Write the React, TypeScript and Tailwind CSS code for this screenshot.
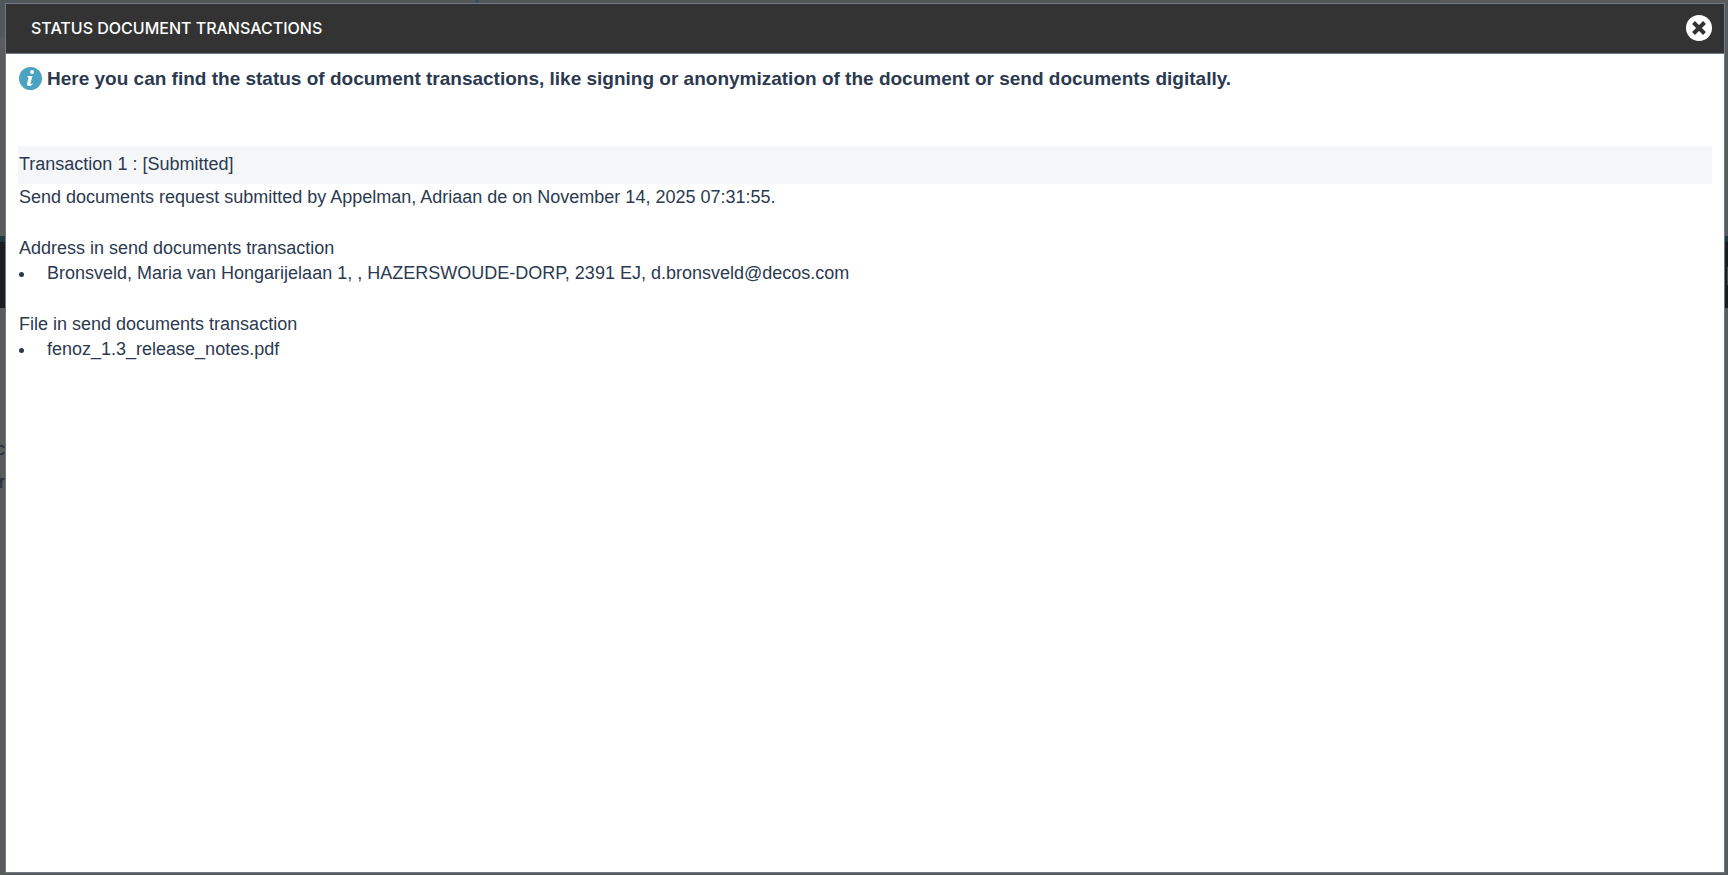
import React from "react";

const addresses = [
  "Bronsveld, Maria van Hongarijelaan 1, , HAZERSWOUDE-DORP, 2391 EJ, d.bronsveld@decos.com",
];
const files = ["fenoz_1.3_release_notes.pdf"];

function InfoIcon() {
  return (
    <svg viewBox="0 0 24 24" className="size-6 shrink-0" aria-hidden="true">
      <circle cx="11.5" cy="11.5" r="11.5" fill="#4aa3c0" />
      <circle cx="13.1" cy="5.1" r="2" fill="#fff" />
      <path
        d="M8.5 8.9h5l-2 7.6c-.1.6.3.7.8.5l1.2-.7.3.6c-1.2 1.4-2.6 2.1-3.9 2.1-1.5 0-2.2-1-1.8-2.5l1.4-5.5c.1-.6-.2-.8-.8-.8h-.2z"
        fill="#fff"
      />
    </svg>
  );
}

function CloseIcon() {
  return (
    <svg viewBox="0 0 26 26" className="size-[26px]" aria-hidden="true">
      <circle cx="13" cy="13" r="13" fill="#fff" />
      <path d="M7.5 7.5l11 11M18.5 7.5l-11 11" stroke="#333" strokeWidth="4" />
    </svg>
  );
}

function Backdrop() {
  return (
    <div className="absolute inset-0 flex flex-col overflow-hidden text-lg leading-[33px] text-[#222b3a]" aria-hidden="true">
      <div className="h-[37px] w-5/6 bg-[#525759]">
        <div className="ml-[33%] h-[3px] w-1 rounded-full bg-[#3a4f5a]" />
      </div>
      <div className="mt-[199px] h-px bg-[#1d3b4e]" />
      <div className="h-1.5 border-b border-[#101c22] bg-[#24393f]" />
      <div className="flex h-[65px] items-center justify-end bg-[#1d1d1d]">
        <div className="h-[18px] w-px bg-[#4a4a4a]" />
      </div>
      <div className="mt-[125px] -ml-1">c</div>
      <div className="-ml-px">r</div>
    </div>
  );
}

function Section({ title, items }: { title: string; items: string[] }) {
  return (
    <section className="mt-[26px]">
      <h3>{title}</h3>
      <ul>
        {items.map((item) => (
          <li key={item} className="flex items-center gap-[23px]">
            <span className="mt-0.5 size-[5px] shrink-0 rounded-full bg-[#2b3a50]" />
            {item}
          </li>
        ))}
      </ul>
    </section>
  );
}

export default function App() {
  return (
    <div className="relative flex min-h-screen bg-[#5b5b5b] pt-[3px] pr-[3px] pb-0.5 pl-[5px] font-['Liberation_Sans',Arial,sans-serif]">
      <Backdrop />
      <div
        role="dialog"
        aria-labelledby="dialog-title"
        className="relative flex flex-1 flex-col border border-[#6f7b8b] bg-white text-[#2b3a50]"
      >
        <header className="flex h-[50px] items-center justify-between border-b border-[#6f7b8b] bg-[#333] pr-3 pb-px pl-[25px]">
          <h1 id="dialog-title" className="font-[Inter,sans-serif] text-base font-medium text-white">
            STATUS DOCUMENT TRANSACTIONS
          </h1>
          <button type="button" aria-label="Close" className="cursor-pointer">
            <CloseIcon />
          </button>
        </header>
        <main className="px-3 pt-3 text-lg leading-[25px]">
          <p className="flex items-center gap-1 pl-px text-[19px] font-bold">
            <InfoIcon />
            Here you can find the status of document transactions, like signing or anonymization of the document or send documents digitally.
          </p>
          <h2 className="mt-[55px] mb-px bg-[#f4f6f8] px-px pt-1.5 pb-[7px]">Transaction 1 : [Submitted]</h2>
          <div className="px-px">
            <p>Send documents request submitted by Appelman, Adriaan de on November 14, 2025 07:31:55.</p>
            <Section title="Address in send documents transaction" items={addresses} />
            <Section title="File in send documents transaction" items={files} />
          </div>
        </main>
      </div>
    </div>
  );
}
